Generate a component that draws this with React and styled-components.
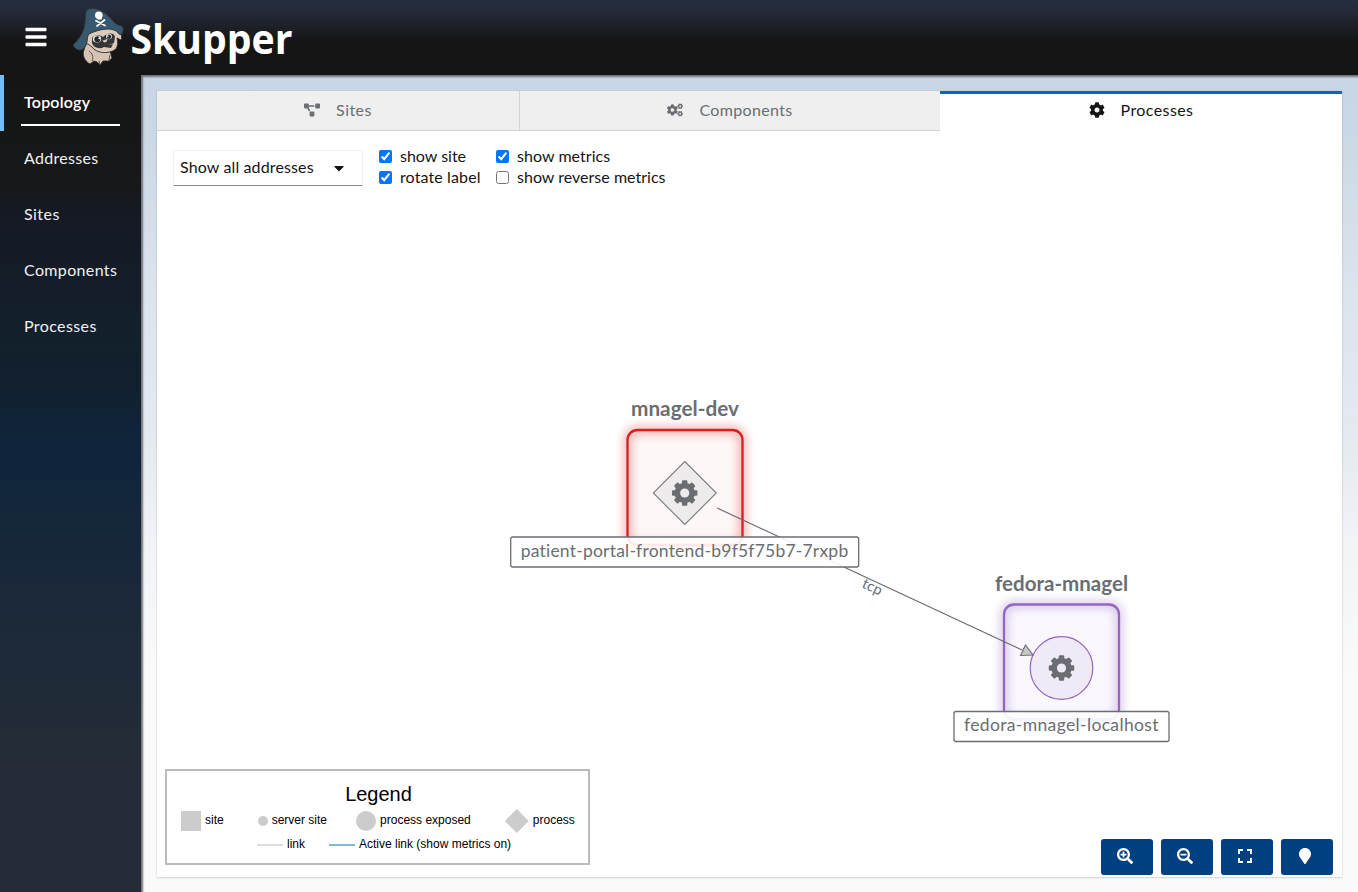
import React from "react";
import styled, { createGlobalStyle, css } from "styled-components";
import { FaBars, FaProjectDiagram, FaCogs, FaCog, FaCaretDown, FaSearchPlus, FaSearchMinus, FaMapMarker } from "react-icons/fa";

const textFont = `Lato, "Open Sans", "Liberation Sans", sans-serif`;
const legendFont = `"Liberation Sans", Arial, sans-serif`;

const GlobalStyle = createGlobalStyle`
  *, *::before, *::after { box-sizing: border-box; }
  body { margin: 0; font-family: ${textFont}; font-size: 16px; line-height: 24px; color: #151515; font-variant-ligatures: none; }
`;

const Page = styled.div`
  display: grid;
  grid-template-columns: 141px 1fr;
  grid-template-rows: 75px 1fr;
  width: 100%;
  height: 100vh;
  min-height: 892px;
  overflow: hidden;
`;

const Header = styled.header`
  grid-column: 1 / -1;
  display: flex;
  align-items: center;
  background: linear-gradient(#262d3d 0, #242b3b 10px, #151515 42px);
`;

const MenuButton = styled.button`
  display: flex;
  align-items: center;
  justify-content: center;
  width: 72px;
  height: 75px;
  padding: 0 0 2px;
  border: 0;
  background: transparent;
  color: #fff;
`;

const Brand = styled.svg`
  display: block;
  width: 240px;
  height: 75px;
  overflow: visible;
`;

const Sidebar = styled.nav`
  background: linear-gradient(#151515 0, #161819 105px, #151a25 150px, #141c28 195px, #13202c 255px, #12212f 315px, #102339 350px, #0f253c 385px, #13263a 435px, #17273b 475px, #1c2939 545px, #202b38 620px, #242d37 680px, #262b39 705px, #262b3a 100%);
`;

const NavItem = styled.a`
  display: block;
  height: 56px;
  padding: 15px 0 0 ${(p) => (p.$active ? "20px" : "24px")};
  border-left: ${(p) => (p.$active ? "4px solid #73bcf7" : "0")};
  color: #f0f0f0;
  font-weight: ${(p) => (p.$active ? 600 : 400)};
  letter-spacing: ${(p) => p.$spacing}px;
  white-space: nowrap;
  ${(p) => p.$active && css`
    color: #fff;
    &::after { content: ""; display: block; width: 99px; height: 2px; margin: 10px 0 0 -3px; background: #fff; }
  `}
`;

const Main = styled.main`
  display: flex;
  padding: 16px 16px 15px 16px;
  min-width: 0;
  box-shadow: inset 2px 2px 2px #707078;
  background: linear-gradient(#c8d6e4 0, #cbd8e5 60px, #dbe4ed 210px, #e3e8f1 335px, #e7ecef 385px, #f1f3f7 465px, #fafafa 605px);
`;

const Card = styled.section`
  flex: 1;
  display: flex;
  flex-direction: column;
  min-width: 0;
  background: #fff;
  box-shadow: 0 1px 2px rgba(3, 3, 3, 0.14), 0 0 2px rgba(3, 3, 3, 0.08);
`;

const Tabs = styled.div`
  display: grid;
  grid-template-columns: 363px 420px 1fr;
  height: 40px;
`;

const Tab = styled.button`
  display: flex;
  align-items: center;
  justify-content: center;
  gap: 16px;
  padding: 0 0 1px;
  border: solid #d2d2d2;
  border-width: 0 ${(p) => (p.$last ? 0 : 1)}px 1px 0;
  background: #efefef;
  color: #6a6e73;
  font: inherit;
  letter-spacing: ${(p) => p.$spacing}px;
  ${(p) => p.$active && css`
    border: 0;
    border-top: 3px solid #06c;
    padding-bottom: 5px;
    background: #fff;
    color: #151515;
  `}
`;

const Canvas = styled.div`
  position: relative;
  flex: 1;
  display: flex;
  flex-direction: column;
  justify-content: space-between;
`;

const Toolbar = styled.div`
  display: flex;
  padding: 19px 16px 0;
`;

const Select = styled.button`
  display: flex;
  align-items: center;
  justify-content: space-between;
  width: 190px;
  height: 36px;
  margin-right: 16px;
  padding: 0 15px 2px 6px;
  border: 1px solid #f0f0f0;
  border-bottom-color: #8a8d90;
  background: #fff;
  color: #151515;
  font: inherit;
  letter-spacing: ${(p) => p.$spacing}px;
  svg { position: relative; top: 1px; }
`;

const CheckColumn = styled.div`
  display: flex;
  flex-direction: column;
  width: ${(p) => p.$width}px;
  margin-top: -5px;
`;

const Check = styled.label`
  display: flex;
  align-items: center;
  gap: 8px;
  height: 21px;
  letter-spacing: ${(p) => p.$spacing}px;
  white-space: nowrap;
  input { width: 13px; height: 13px; margin: 2px 0 0; }
`;

const Graph = styled.svg`
  position: absolute;
  inset: 0;
  width: 1185px;
  height: 746px;
  font-family: ${textFont};
`;

const Footer = styled.div`
  position: relative;
  display: flex;
  align-items: flex-end;
  justify-content: space-between;
  padding: 0 9px 2px 8px;
`;

const Legend = styled.div`
  width: 425px;
  height: 96px;
  margin-bottom: 10px;
  padding: 12px 12px 0 14px;
  border: 2px solid #bbb;
  background: #fff;
  color: #000;
  font: 12px/20px ${legendFont};
`;

const LegendTitle = styled.div`
  font-size: 20px;
  line-height: 22px;
  text-align: center;
`;

const LegendRow = styled.div`
  display: flex;
  align-items: center;
  height: 24px;
  padding-left: ${(p) => p.$indent || 0}px;
  margin-top: ${(p) => p.$top || 0}px;
`;

const LegendItem = styled.div`
  display: flex;
  align-items: center;
  gap: ${(p) => p.$gap || 4}px;
  margin-right: ${(p) => p.$after || 0}px;
  white-space: nowrap;
  span { position: relative; top: -1px; }
`;

const Swatch = styled.i`
  width: ${(p) => p.$size}px;
  height: ${(p) => p.$size}px;
  background: #ccc;
  border-radius: ${(p) => (p.$round ? "50%" : 0)};
  ${(p) => p.$diamond && css`clip-path: polygon(50% 0, 100% 50%, 50% 100%, 0 50%);`}
`;

const LineSwatch = styled.i`
  width: 26px;
  height: 2px;
  background: ${(p) => p.$color};
`;

const Controls = styled.div`
  display: flex;
  gap: 8px;
`;

const ControlButton = styled.button`
  display: flex;
  align-items: center;
  justify-content: center;
  width: 52px;
  height: 36px;
  padding: 0 4px 2px 0;
  border: 0;
  border-radius: 3px;
  background: #004080;
  color: #fff;
`;

function SkupperBrand() {
  return (
    <Brand viewBox="72 0 240 75">
      <g stroke="#302c2b" strokeWidth="0.9" strokeLinejoin="round">
        <path d="M84 50C82 54 84 61 90 64L94 61L97 62L100 65L103 61L109 61L112 58L110 51L115 44L100 38L86 43Z" fill="#d5c3b4" />
        <path d="M86 35C83 42 84 45 88 44L92 47C96 53 108 55 116 49C118 45 118 42 117 38L121 40C123 36 120 32 117 30C108 26 92 29 86 35Z" fill="#dbcaba" />
        <path d="M73 45C78 40 82 35 84 28C86 21 84 12 88 9C97 6 107 13 114 22C116 25 120 25 123 27C124 32 122 36 119 34C114 26 99 29 89 34C86 38 89 42 84 48C81 52 75 50 73 45Z" fill="#365970" />
      </g>
      <path d="M92 38C93 35 100 34 103 37C107 33 114 32 115 37L114 43L108 45L113 44L111 48L104 47C99 50 93 47 92 43Z" fill="#363637" />
      <ellipse cx="97" cy="39" rx="4.2" ry="3.4" fill="#f3f3f3" />
      <ellipse cx="109" cy="36.5" rx="2.9" ry="2.8" fill="#f3f3f3" />
      <circle cx="97.3" cy="39.3" r="3" fill="#252a2c" />
      <circle cx="109" cy="36.8" r="2.2" fill="#252a2c" />
      <circle cx="99.4" cy="38.2" r="1" fill="#fff" />
      <circle cx="107.8" cy="36" r="0.8" fill="#fff" />
      <path d="M102.5 40.5L107.5 39L106.5 42L104 42.5Z" fill="#d5c3b4" />
      <path d="M89 51C92 53 94 57 92 61M100 65L99 61M110 55L109 60" fill="none" stroke="#4b4541" strokeWidth="0.9" />
      <g fill="#fff">
        <circle cx="98.8" cy="15.2" r="3.8" />
        <path d="M97 17l5-1v3.2l-4 .6z" />
      </g>
      <path d="M96 20.8L105 25.5M104.5 20L97 26" stroke="#fff" strokeWidth="1.8" strokeLinecap="round" />
      <text x="130.5" y="53.5" fill="#fff" fontFamily='"Open Sans", sans-serif' fontWeight="700" fontSize="41" textLength="162" lengthAdjust="spacingAndGlyphs">Skupper</text>
    </Brand>
  );
}

function Gear({ x, y, fill }) {
  return (
    <g transform={`translate(${x} ${y})`}>
      {[0, 45, 90, 135].map((a) => (
        <rect key={a} x="-2.7" y="-12.7" width="5.4" height="25.4" rx="1" fill="#6a6e73" transform={`rotate(${a})`} />
      ))}
      <circle r="7.4" fill="none" stroke="#6a6e73" strokeWidth="5.6" />
      <circle r="4.6" fill={fill} />
    </g>
  );
}

function SiteBox({ x, y, color, fill, name, nameWidth }) {
  return (
    <g>
      <text x={x + 57.5} y={y - 14} textAnchor="middle" fontSize="20" fontWeight="700" fill="#6a6e73" textLength={nameWidth} lengthAdjust="spacingAndGlyphs">{name}</text>
      <rect x={x} y={y} width="115" height="115" rx="10" fill={fill} />
      <rect x={x} y={y} width="115" height="115" rx="10" fill="none" stroke={color} strokeWidth="7" opacity="0.4" filter="url(#glow)" />
      <rect x={x} y={y} width="115" height="115" rx="10" fill="none" stroke={color} strokeWidth="2.3" />
    </g>
  );
}

function NodeLabel({ x, y, width, children }) {
  return (
    <g>
      <rect x={x} y={y} width={width} height="30" rx="2" fill="#fff" fillOpacity="0.9" stroke="#6a6e73" strokeWidth="1.3" />
      <text x={x + 10} y={y + 19.7} fontSize="17.5" fill="#6a6e73" textLength={width - 20.5} lengthAdjust="spacing">{children}</text>
    </g>
  );
}

function Topology() {
  return (
    <Graph viewBox="157 131 1185 746">
      <defs>
        <filter id="glow" x="-30%" y="-30%" width="160%" height="160%"><feGaussianBlur stdDeviation="5" /></filter>
      </defs>
      <SiteBox x={627.5} y={430} color="#d6201f" fill="#fdf7f7" name="mnagel-dev" nameWidth={108} />
      <SiteBox x={1004} y={604.5} color="#9467bd" fill="#faf8fe" name="fedora-mnagel" nameWidth={133} />
      <path d="M684.8 461.5L716.3 493L684.8 524.5L653.3 493Z" fill="#edebeb" stroke="#7c7d7d" strokeWidth="1.1" />
      <Gear x={684.7} y={493} fill="#edebeb" />
      <circle cx="1061.5" cy="668" r="31.3" fill="#efeaf5" stroke="#9467bd" strokeWidth="1.2" />
      <Gear x={1061.5} y={668} fill="#efeaf5" />
      <path d="M717 508L1022 650" stroke="#6a6e73" strokeWidth="1.2" />
      <path d="M1025.5 645L1033 655L1020.5 655.5Z" fill="#c8c8c8" stroke="#6a6e73" strokeWidth="1.1" />
      <text transform="translate(861 587) rotate(25)" fontSize="14.5" fill="#6a6e73" textLength="20.5">tcp</text>
      <NodeLabel x={510.7} y={537} width={348}>patient-portal-frontend-b9f5f75b7-7rxpb</NodeLabel>
      <NodeLabel x={954} y={711.5} width={215}>fedora-mnagel-localhost</NodeLabel>
    </Graph>
  );
}

export default function App() {
  return (
    <Page>
      <GlobalStyle />
      <Header>
        <MenuButton aria-label="Menu"><FaBars size={24} /></MenuButton>
        <SkupperBrand />
      </Header>
      <Sidebar>
        <NavItem $active $spacing={0.2}>Topology</NavItem>
        <NavItem $spacing={0.3}>Addresses</NavItem>
        <NavItem $spacing={0.45}>Sites</NavItem>
        <NavItem $spacing={0.35}>Components</NavItem>
        <NavItem $spacing={0.4}>Processes</NavItem>
      </Sidebar>
      <Main>
        <Card>
          <Tabs>
            <Tab $spacing={0.45}><FaProjectDiagram size={16} />Sites</Tab>
            <Tab $last $spacing={0.35}><FaCogs size={16} />Components</Tab>
            <Tab $active $spacing={0.4}><FaCog size={16} />Processes</Tab>
          </Tabs>
          <Canvas>
            <Topology />
            <Toolbar>
              <Select $spacing={0.13}>Show all addresses<FaCaretDown size={16} /></Select>
              <CheckColumn $width={117}>
                <Check $spacing={0}><input type="checkbox" defaultChecked />show site</Check>
                <Check $spacing={0.12}><input type="checkbox" defaultChecked />rotate label</Check>
              </CheckColumn>
              <CheckColumn $width={180}>
                <Check $spacing={0.05}><input type="checkbox" defaultChecked />show metrics</Check>
                <Check $spacing={0.02}><input type="checkbox" />show reverse metrics</Check>
              </CheckColumn>
            </Toolbar>
            <Footer>
              <Legend>
                <LegendTitle>Legend</LegendTitle>
                <LegendRow $top={4}>
                  <LegendItem $after={34}><Swatch $size={20} /><span>site</span></LegendItem>
                  <LegendItem $after={29}><Swatch $size={10} $round /><span>server site</span></LegendItem>
                  <LegendItem $after={34}><Swatch $size={20} $round /><span>process exposed</span></LegendItem>
                  <LegendItem><Swatch $size={24} $diamond /><span>process</span></LegendItem>
                </LegendRow>
                <LegendRow $indent={76}>
                  <LegendItem $after={24}><LineSwatch $color="#ddd" /><span>link</span></LegendItem>
                  <LegendItem><LineSwatch $color="#88b8d8" /><span>Active link (show metrics on)</span></LegendItem>
                </LegendRow>
              </Legend>
              <Controls>
                <ControlButton aria-label="Zoom in"><FaSearchPlus size={16} /></ControlButton>
                <ControlButton aria-label="Zoom out"><FaSearchMinus size={16} /></ControlButton>
                <ControlButton aria-label="Fit to screen">
                  <svg width="14" height="14" viewBox="0 0 14 14" fill="none" stroke="#fff" strokeWidth="2"><path d="M1 5V1H5M9 1H13V5M13 9V13H9M5 13H1V9" /></svg>
                </ControlButton>
                <ControlButton aria-label="Center"><FaMapMarker size={16} /></ControlButton>
              </Controls>
            </Footer>
          </Canvas>
        </Card>
      </Main>
    </Page>
  );
}
